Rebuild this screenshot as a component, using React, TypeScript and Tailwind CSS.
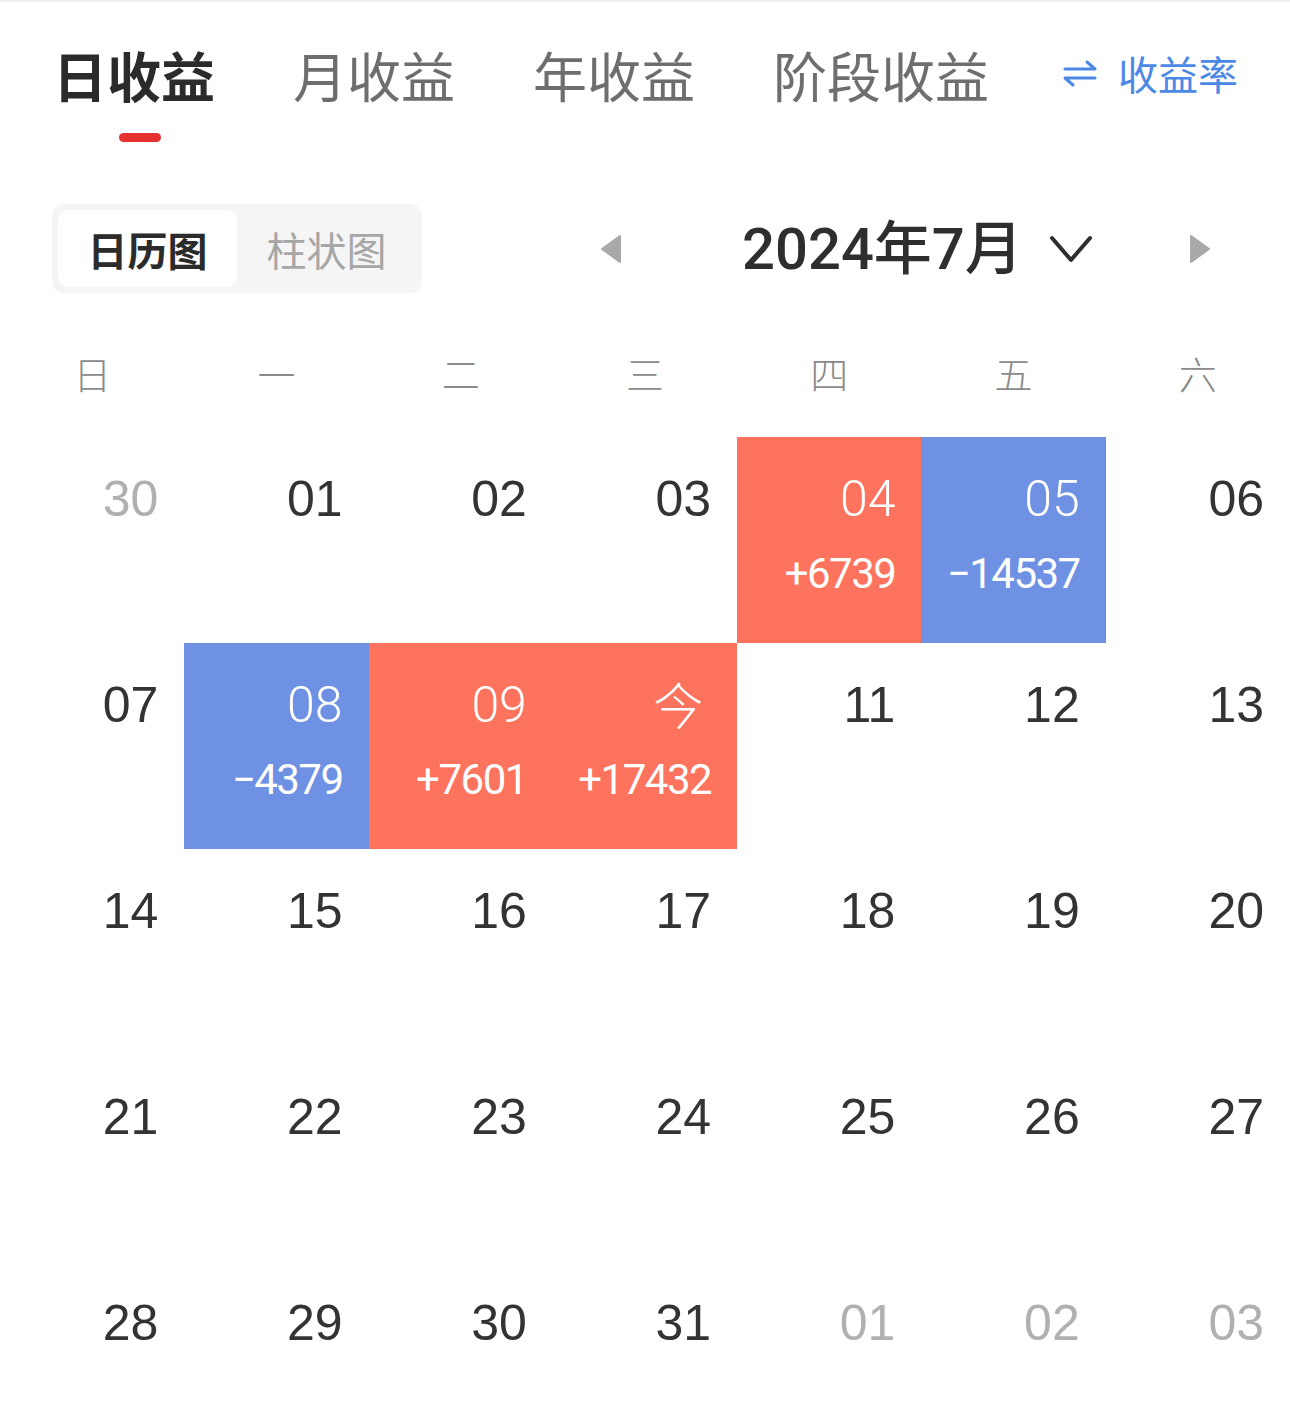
import React from 'react';

type Day = {
  label: string;
  muted?: boolean;
  amount?: string;
  tone?: 'up' | 'down';
};

const weekdays = ['日', '一', '二', '三', '四', '五', '六'];

const weeks: Day[][] = [
  [
    { label: '30', muted: true },
    { label: '01' },
    { label: '02' },
    { label: '03' },
    { label: '04', amount: '+6739', tone: 'up' },
    { label: '05', amount: '−14537', tone: 'down' },
    { label: '06' },
  ],
  [
    { label: '07' },
    { label: '08', amount: '−4379', tone: 'down' },
    { label: '09', amount: '+7601', tone: 'up' },
    { label: '今', amount: '+17432', tone: 'up' },
    { label: '11' },
    { label: '12' },
    { label: '13' },
  ],
  [{ label: '14' }, { label: '15' }, { label: '16' }, { label: '17' }, { label: '18' }, { label: '19' }, { label: '20' }],
  [{ label: '21' }, { label: '22' }, { label: '23' }, { label: '24' }, { label: '25' }, { label: '26' }, { label: '27' }],
  [
    { label: '28' },
    { label: '29' },
    { label: '30' },
    { label: '31' },
    { label: '01', muted: true },
    { label: '02', muted: true },
    { label: '03', muted: true },
  ],
];

const tabs = ['日收益', '月收益', '年收益', '阶段收益'];

function DayCell({ day }: { day: Day }) {
  const bg = day.tone === 'up' ? 'bg-[#fe735d]' : day.tone === 'down' ? 'bg-[#6e91e4]' : '';
  const isToday = day.label === '今';

  let labelCls = "font-['Liberation_Sans',Arial,sans-serif] font-normal";
  if (day.tone) labelCls = 'font-light';
  if (isToday) labelCls = "font-['Noto_Sans_CJK_SC',sans-serif] font-light mr-[8px] -translate-y-[2px]";

  const color = day.tone ? 'text-white' : day.muted ? 'text-[#b0b0b0]' : 'text-[#333333]';

  return (
    <div className={`${bg} h-[206px] flex flex-col items-end pr-[26px] pt-[37px]`}>
      <span className={`${color} ${labelCls} h-[50px] text-[50px] leading-none`}>{day.label}</span>
      {day.amount && (
        <span className="mt-[29px] text-[42px] leading-none font-normal tracking-[-1.5px] text-white">
          {day.amount}
        </span>
      )}
    </div>
  );
}

export default function App() {
  return (
    <div className="w-[1290px] h-[1422px] overflow-hidden bg-white border-t-2 border-[#eeeeee] font-[Roboto,'Noto_Sans_CJK_SC',sans-serif]">
      {/* top tabs */}
      <div className="h-[148px] flex items-start pl-[53px] pr-[52px] pt-[46px] font-['Noto_Sans_CJK_SC',sans-serif]">
        {tabs.map((t, i) => (
          <div key={t} className={`flex flex-col items-center ${i > 0 ? 'ml-[78px]' : ''}`}>
            <span
              className={`text-[54px] leading-none ${
                i === 0 ? 'font-bold text-[#2b2b2b]' : 'font-normal text-[#6e6e6e]'
              }`}
            >
              {t}
            </span>
            {i === 0 && <div className="mt-[31px] ml-[12px] w-[42px] h-[9px] rounded-full bg-[#e5322f]" />}
          </div>
        ))}
        <div className="ml-auto flex items-center gap-[20px] text-[#4c88e6] mt-[5px]">
          <svg width="36" height="30" viewBox="0 0 36 30" fill="none" stroke="currentColor" strokeWidth="3" strokeLinecap="round" strokeLinejoin="round">
            <path d="M3 11 H33 L25 4" />
            <path d="M33 20 H3 L11 27" />
          </svg>
          <span className="text-[40px] leading-none">收益率</span>
        </div>
      </div>

      {/* view switch + month nav */}
      <div className="mt-[54px] h-[89px] flex items-center">
        <div className="ml-[52px] w-[370px] h-[89px] rounded-[12px] bg-[#f5f5f5] p-[6px] flex font-['Noto_Sans_CJK_SC',sans-serif]">
          <div className="flex-1 rounded-[10px] bg-white flex items-center justify-center text-[40px] font-bold text-[#2b2b2b]">
            日历图
          </div>
          <div className="flex-1 flex items-center justify-center text-[40px] text-[#a6a6a6]">柱状图</div>
        </div>

        <svg className="ml-[178px]" width="22" height="30" viewBox="0 0 22 30">
          <path d="M20 2 L2 15 L20 28 Z" fill="#a9a9a9" stroke="#a9a9a9" strokeWidth="2" strokeLinejoin="round" />
        </svg>

        <span className="ml-[120px] text-[58px] leading-none font-medium text-[#2e2e2e]">2024年7月</span>

        <svg className="ml-[26px]" width="44" height="28" viewBox="0 0 44 28" fill="none" stroke="#2e2e2e" strokeWidth="4" strokeLinecap="round" strokeLinejoin="round">
          <path d="M3 3 L22 25 L41 3" />
        </svg>

        <svg className="ml-[96px]" width="22" height="30" viewBox="0 0 22 30">
          <path d="M2 2 L20 15 L2 28 Z" fill="#a9a9a9" stroke="#a9a9a9" strokeWidth="2" strokeLinejoin="round" />
        </svg>
      </div>

      {/* weekday header */}
      <div className="h-[144px] pt-[16px] grid grid-cols-7 items-center font-['Noto_Sans_CJK_SC',sans-serif]">
        {weekdays.map((w) => (
          <span key={w} className="text-center text-[38px] leading-none font-light text-[#8a8a8a]">
            {w}
          </span>
        ))}
      </div>

      {/* calendar grid */}
      <div className="grid grid-cols-7">
        {weeks.flat().map((d, i) => (
          <DayCell key={i} day={d} />
        ))}
      </div>
    </div>
  );
}
